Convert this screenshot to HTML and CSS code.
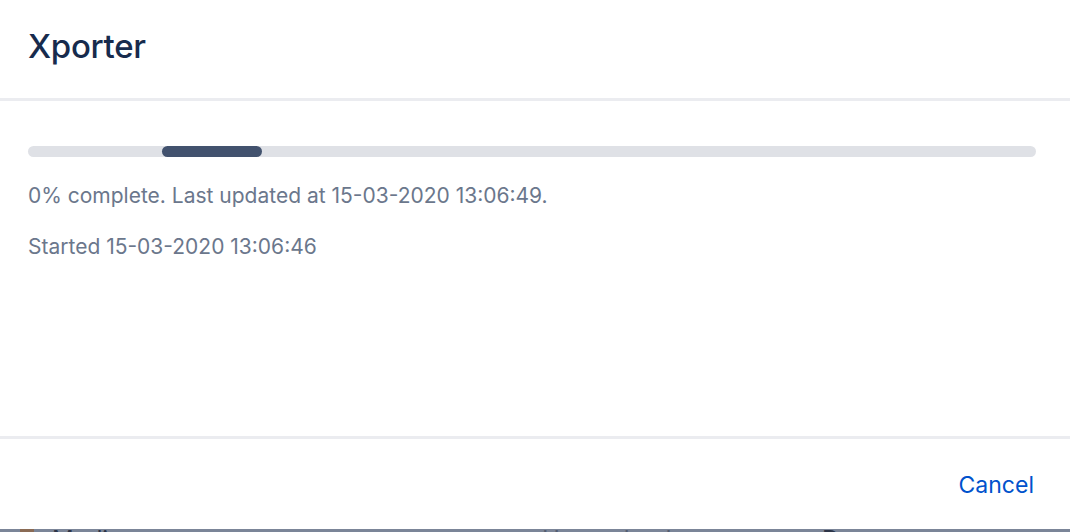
FILE: index.html
```html
<!DOCTYPE html>
<html lang="en">
<head>
  <meta charset="UTF-8">
  <meta name="viewport" content="width=device-width, initial-scale=1.0">
  <title>Xporter</title>
  <link rel="stylesheet" href="styles.css">
</head>
<body>
  <div class="dialog">
    <div class="dialog-header">
      <h1 class="dialog-title">Xporter</h1>
    </div>

    <div class="dialog-body">
      <div class="progress-track">
        <div class="progress-indicator"></div>
      </div>
      <p class="status-text">0% complete. Last updated at 15-03-2020 13:06:49.</p>
      <p class="status-text">Started 15-03-2020 13:06:46</p>
    </div>

    <div class="dialog-footer">
      <button class="cancel-btn">Cancel</button>
    </div>
  </div>

  <div class="page-behind">
    <div class="issue-row">
      <span class="priority-icon"></span>
      <span class="cell cell--priority">Medium</span>
      <span class="cell cell--resolution">Unresolved</span>
      <span class="cell cell--status">Done</span>
    </div>
  </div>
</body>
</html>
```

FILE: styles.css
```css
body {
  margin: 0;
  padding: 0;
  background: #7b8598;
  font-family: Inter, "Noto Sans", Arial, sans-serif;
  overflow: hidden;
}

.dialog {
  background: #fff;
  height: 529px;
  display: flex;
  flex-direction: column;
}

.dialog-header {
  height: 98px;
  border-bottom: 3px solid #ebecf0;
  display: flex;
  align-items: center;
  padding: 0 28px;
  box-sizing: content-box;
}

.dialog-title {
  margin: 0;
  font-size: 33px;
  font-weight: 500;
  color: #172b4d;
  letter-spacing: -0.3px;
  padding-bottom: 7px;
}

.dialog-body {
  flex: 1;
  padding: 45px 34px 0 28px;
  border-bottom: 3px solid #ebecf0;
}

.progress-track {
  height: 11px;
  border-radius: 6px;
  background: #dfe1e6;
  display: flex;
  padding-left: 134px;
}

.progress-indicator {
  width: 100px;
  height: 100%;
  border-radius: 6px;
  background: #42526e;
}

.status-text {
  margin: 25px 0 0;
  font-size: 21px;
  line-height: 28px;
  color: #6b778c;
}

.status-text + .status-text {
  margin-top: 23px;
}

.dialog-footer {
  height: 90px;
  display: flex;
  justify-content: flex-end;
  align-items: center;
  padding-right: 36px;
}

.cancel-btn {
  background: none;
  border: none;
  padding: 2px 0 0;
  font-family: inherit;
  font-size: 23px;
  color: #0052cc;
  cursor: pointer;
}

.page-behind {
  height: 3px;
  overflow: hidden;
}

.issue-row {
  display: flex;
  align-items: flex-start;
  font-size: 24px;
  line-height: 1;
  color: #2c3447;
  padding-left: 20px;
  margin-top: -1px;
}

.priority-icon {
  width: 14px;
  height: 14px;
  background: #8a6b55;
  margin-right: 18px;
}

.cell--priority {
  width: 490px;
}

.cell--resolution {
  width: 280px;
  color: #535d70;
}
```
